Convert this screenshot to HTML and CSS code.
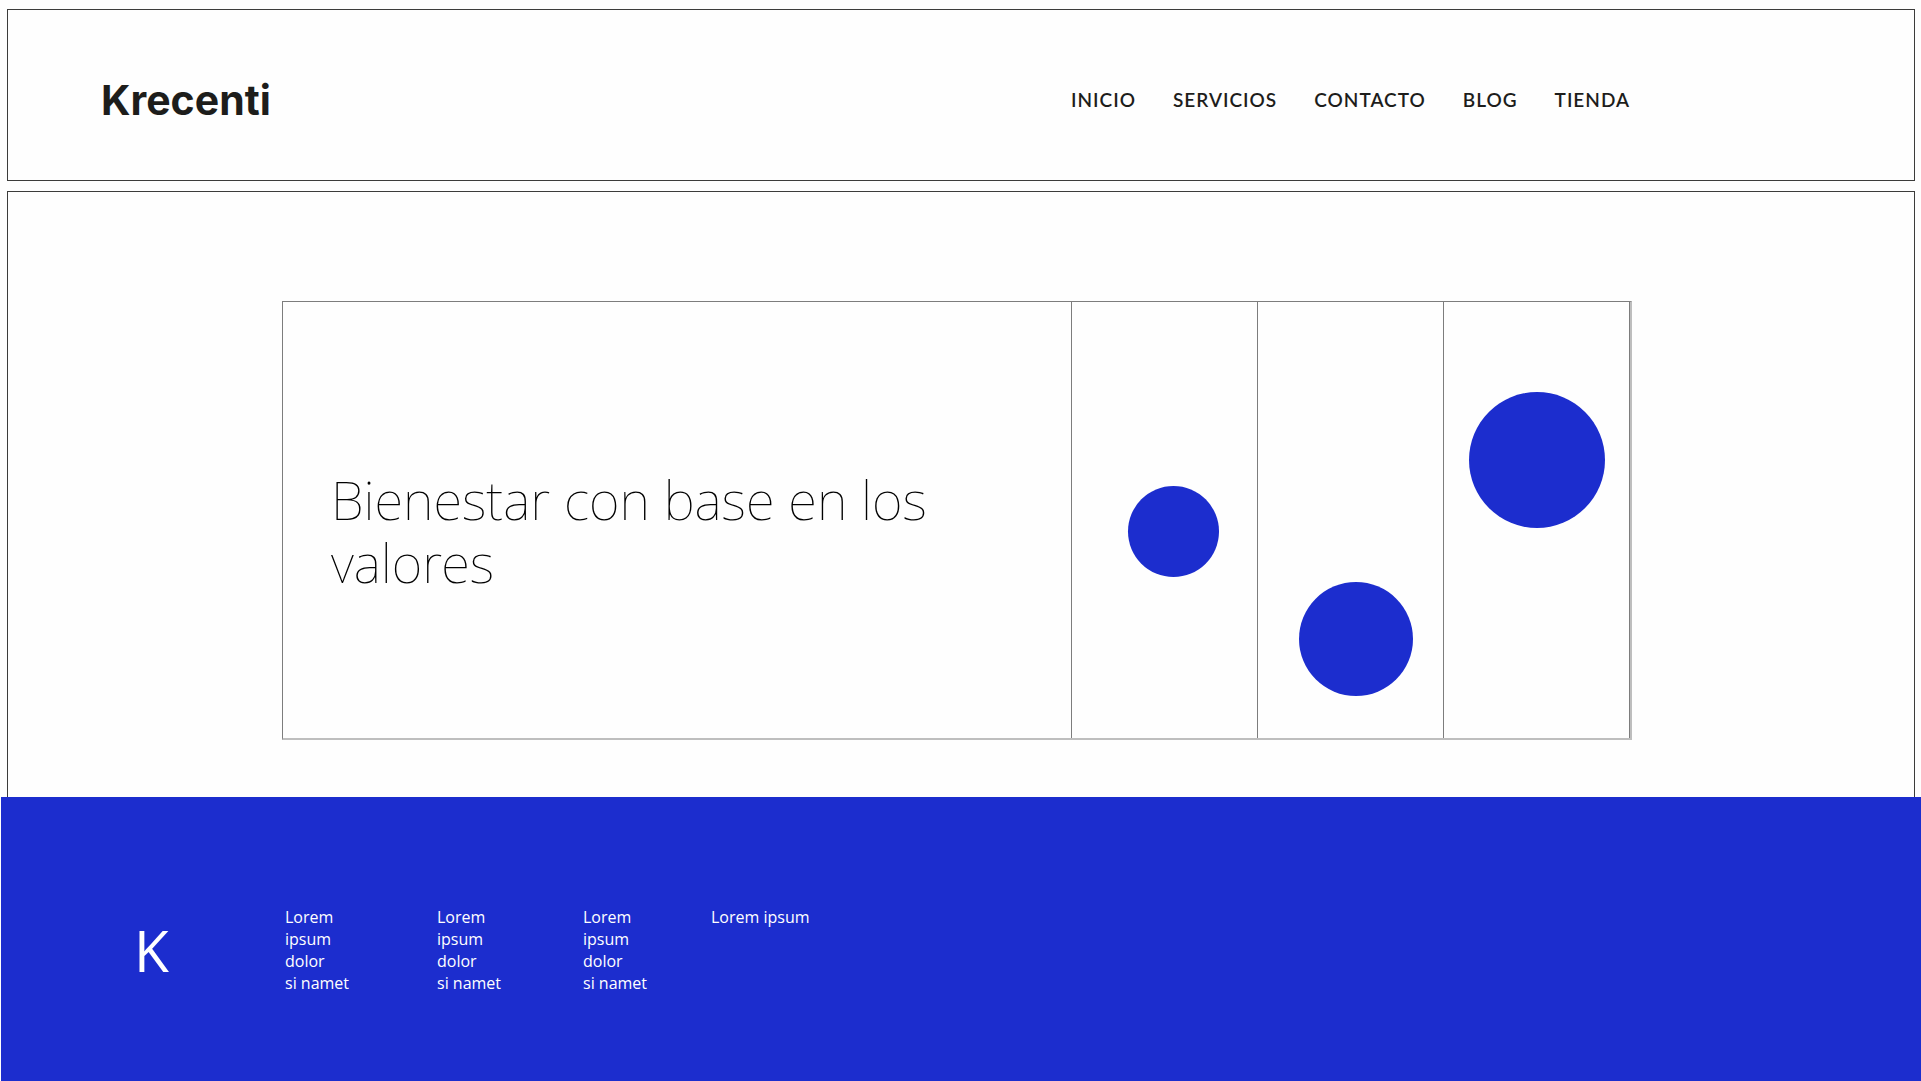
FILE: index.html
```html
<!DOCTYPE html>
<html lang="es">
<head>
<meta charset="utf-8">
<meta name="viewport" content="width=device-width, initial-scale=1">
<title>Krecenti</title>
<link rel="stylesheet" href="styles.css">
</head>
<body>
<header class="header">
  <a class="logo" href="#">Krecenti</a>
  <nav class="nav">
    <a href="#">INICIO</a>
    <a href="#">SERVICIOS</a>
    <a href="#">CONTACTO</a>
    <a href="#">BLOG</a>
    <a href="#">TIENDA</a>
  </nav>
</header>
<main class="main">
  <section class="hero">
    <h1 class="hero-title">Bienestar con base en los valores</h1>
    <div class="cell"><div class="dot dot-small"></div></div>
    <div class="cell"><div class="dot dot-medium"></div></div>
    <div class="cell"><div class="dot dot-large"></div></div>
  </section>
</main>
<footer class="footer">
  <a class="footer-mark" href="#">K</a>
  <div class="footer-columns">
    <p>Lorem<br>ipsum<br>dolor<br>si namet</p>
    <p>Lorem<br>ipsum<br>dolor<br>si namet</p>
    <p>Lorem<br>ipsum<br>dolor<br>si namet</p>
    <p>Lorem ipsum</p>
  </div>
</footer>
</body>
</html>
```
FILE: styles.css
```css
* {
  box-sizing: border-box;
}

body {
  display: flex;
  flex-direction: column;
  min-height: 100vh;
  margin: 0;
  padding-top: 9px;
  background: #fefefe;
  color: #1d1d1b;
  font-family: Lato, sans-serif;
}

a {
  color: inherit;
  text-decoration: none;
}

.header {
  display: flex;
  align-items: center;
  justify-content: space-between;
  margin: 0 6px 10px 7px;
  padding: 60px 284px 50px 93px;
  border: 1px solid #3c3c3b;
}

.logo {
  font-family: Inter, sans-serif;
  font-size: 41px;
  font-weight: 700;
  line-height: 60px;
}

.nav {
  display: flex;
  gap: 37px;
  font-size: 19px;
  font-weight: 600;
  line-height: 24px;
  letter-spacing: 1px;
}

.main {
  margin: 0 6px 0 7px;
  padding: 109px 282px 57px 274px;
  border: 1px solid #3c3c3b;
  border-bottom: 0;
}

.hero {
  display: grid;
  grid-template-columns: 788fr 186fr 186fr 187fr;
  min-height: 439px;
  border: 1px solid #7d7d7d;
  border-bottom: 2px solid #bebebe;
  border-right: 2px solid #bebebe;
}

.hero-title {
  align-self: center;
  margin: 0;
  padding: 22px 48px 0;
  font-family: "Noto Sans", sans-serif;
  font-size: 53px;
  font-weight: 100;
  line-height: 63px;
  color: #000;
}

.cell {
  border-left: 1px solid #7d7d7d;
}

.cell:last-child {
  border-right: 1px solid #7d7d7d;
}

.dot {
  border-radius: 50%;
  background: #1c2dce;
}

.dot-small {
  width: 91px;
  height: 91px;
  margin: 184px 0 0 56px;
}

.dot-medium {
  width: 114px;
  height: 114px;
  margin: 280px 0 0 41px;
}

.dot-large {
  width: 136px;
  height: 136px;
  margin: 90px 0 0 25px;
}

.footer {
  display: flex;
  flex: 1;
  align-items: flex-start;
  margin-left: 1px;
  padding: 109px 133px 80px;
  background: #1c2dce;
  color: #fff;
  font-family: "Open Sans", sans-serif;
}

.footer-mark {
  width: 151px;
  font-size: 57px;
  line-height: 88px;
}

.footer-columns {
  display: grid;
  grid-template-columns: 152px 146px 128px auto;
  font-size: 16px;
  line-height: 22px;
}

.footer-columns p {
  margin: 0;
}
```
